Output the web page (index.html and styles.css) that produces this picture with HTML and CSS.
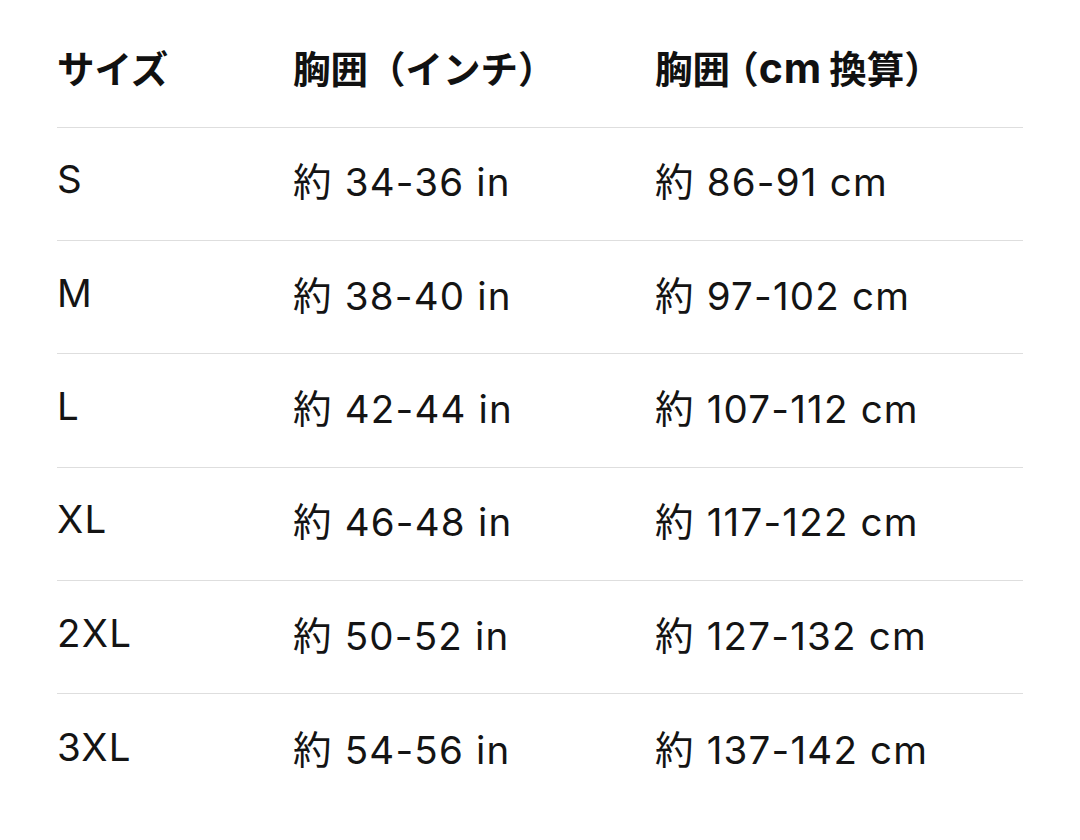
FILE: index.html
```html
<!DOCTYPE html>
<html lang="ja">
<head>
<meta charset="utf-8">
<link rel="stylesheet" href="styles.css">
</head>
<body>
<div class="table">
  <div class="row head">
    <div class="c1">サイズ</div>
    <div class="c2">胸囲（インチ）</div>
    <div class="c3">胸囲<span class="hp open">（</span><span class="lat">cm</span> 換算<span class="hp">）</span></div>
  </div>
  <div class="row">
    <div class="c1">S</div>
    <div class="c2">約 34-36 in</div>
    <div class="c3">約 86-91 cm</div>
  </div>
  <div class="row">
    <div class="c1">M</div>
    <div class="c2">約 38-40 in</div>
    <div class="c3">約 97-102 cm</div>
  </div>
  <div class="row">
    <div class="c1">L</div>
    <div class="c2">約 42-44 in</div>
    <div class="c3">約 107-112 cm</div>
  </div>
  <div class="row">
    <div class="c1">XL</div>
    <div class="c2">約 46-48 in</div>
    <div class="c3">約 117-122 cm</div>
  </div>
  <div class="row">
    <div class="c1">2XL</div>
    <div class="c2">約 50-52 in</div>
    <div class="c3">約 127-132 cm</div>
  </div>
  <div class="row last">
    <div class="c1">3XL</div>
    <div class="c2">約 54-56 in</div>
    <div class="c3">約 137-142 cm</div>
  </div>
</div>
</body>
</html>
```

FILE: styles.css
```css
html, body {
  margin: 0;
  padding: 0;
  background: #ffffff;
}
body {
  font-family: "Inter", "Noto Sans CJK JP", sans-serif;
  color: #141414;
}
.table {
  width: 966px;
  padding: 14.5px 0 0 57px;
}
.row {
  display: grid;
  grid-template-columns: 236px 362px 1fr;
  align-items: center;
  height: 113.33px;
  box-sizing: border-box;
  border-bottom: 1.5px solid #dedede;
  font-size: 38.5px;
  letter-spacing: 1.2px;
}
.row > div {
  white-space: nowrap;
  padding-bottom: 9px;
}
.row.last {
  border-bottom: none;
}
.head {
  font-size: 37.5px;
  font-weight: 700;
  color: #111111;
  letter-spacing: 0;
}
.head > div {
  padding-bottom: 8px;
}
.hp {
  font-feature-settings: "halt" 1;
  font-family: "Noto Sans CJK JP", sans-serif;
}
.hp.open {
  margin-left: 10px;
}
.lat {
  font-size: 41px;
  letter-spacing: 1px;
  margin-left: 0;
  margin-right: -2px;
}
```
